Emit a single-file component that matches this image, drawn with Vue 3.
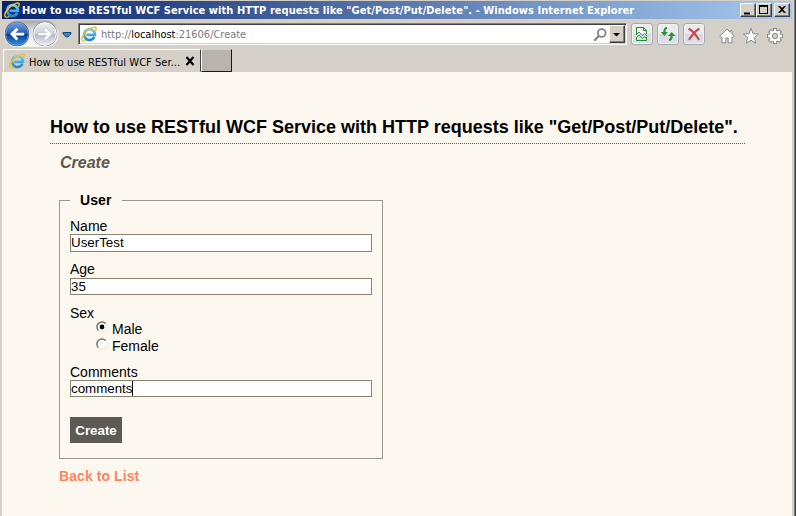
<script setup>
import { ref } from 'vue'

const title = 'How to use RESTful WCF Service with HTTP requests like "Get/Post/Put/Delete".'
const name = ref('UserTest')
const age = ref('35')
const sex = ref('Male')
const comments = ref('comments')
</script>

<template>
  <div class="window">
    <svg class="defs" width="0" height="0" aria-hidden="true">
      <defs>
        <linearGradient id="e-blue" x1="0" y1="0" x2="0" y2="1">
          <stop offset="0" stop-color="#6fcdf5" /><stop offset="1" stop-color="#2389d2" />
        </linearGradient>
        <linearGradient id="back-blue" x1="0" y1="0" x2="0" y2="1">
          <stop offset="0" stop-color="#6f9bd8" /><stop offset=".48" stop-color="#2560b4" />
          <stop offset=".52" stop-color="#083c94" /><stop offset="1" stop-color="#2f8fe0" />
        </linearGradient>
        <linearGradient id="forward-grey" x1="0" y1="0" x2="0" y2="1">
          <stop offset="0" stop-color="#eceef3" /><stop offset=".48" stop-color="#cdd2dc" />
          <stop offset=".52" stop-color="#b4bbc8" /><stop offset="1" stop-color="#e9eef6" />
        </linearGradient>
        <linearGradient id="rim" x1="0" y1="0" x2="0" y2="1">
          <stop offset="0" stop-color="#a9a7a3" /><stop offset=".35" stop-color="#dddbd7" /><stop offset="1" stop-color="#fff" />
        </linearGradient>
        <symbol id="ie" viewBox="0 0 16 16">
          <path d="M13.4 10.9A5.4 5.4 0 1 1 13.9 8.9H5.4" fill="none" stroke="url(#e-blue)" stroke-width="2.7" />
          <path d="M1.7 15.1C-.8 13.4 2.2 7.5 7.3 3.8C11.4.8 15.1.2 15.2 2.3C15.2 3.2 14.8 4.2 14.2 5.1" fill="none" stroke="#f6bd24" stroke-width="1.5" />
          <path d="M1.700 15.100C2.400 15.600 4 15 5.300 14.200" fill="none" stroke="#f6bd24" stroke-width="1.100" />
        </symbol>
      </defs>
    </svg>

    <header class="titlebar">
      <svg class="title-icon"><use href="#ie" /></svg>
      <span class="title-text">{{ title }} - Windows Internet Explorer</span>
      <div class="window-buttons">
        <button class="win-btn" aria-label="Minimize"><svg viewBox="0 0 14 12"><path d="M3 8.500h6v2H3z" /></svg></button>
        <button class="win-btn" aria-label="Maximize"><svg viewBox="0 0 14 12"><path d="M2 1h9v9H2zM3 3v6h7V3z" fill-rule="evenodd" /></svg></button>
        <button class="win-btn close" aria-label="Close"><svg viewBox="0 0 14 12"><path d="M3 2h2l2 2 2-2h2L8 5.500 11 9H9L7 7 5 9H3l3-3.500z" /></svg></button>
      </div>
    </header>

    <nav class="navbar">
      <svg class="travel" viewBox="0 0 56 28">
        <path d="M14 .5H43a13 13 0 0 1 0 26.500H14A13 13 0 0 1 14 .5z" fill="url(#rim)" />
        <circle cx="14" cy="14" r="12.200" fill="#2c4676" />
        <circle cx="14" cy="14" r="11.400" fill="url(#back-blue)" stroke="#8db6e8" stroke-width=".7" />
        <path d="M13.400 7.800l2 2-3 2.900h8.800v2.800h-8.800l3 2.900-2 2L7 14.100z" fill="#fff" />
        <circle cx="42" cy="14" r="12.200" fill="#858b97" />
        <circle cx="42" cy="14" r="11.300" fill="url(#forward-grey)" stroke="#fff" stroke-width="1" />
        <path d="M42.600 7.800l-2 2 3 2.900h-8.800v2.800h8.800l-3 2.900 2 2L49 14.100z" fill="#fff" stroke="#aab0bb" stroke-width=".5" />
      </svg>
      <svg class="recent" viewBox="0 0 10 8"><path d="M1 1.500h8v1.300L5.800 6H4.200L1 2.800z" fill="#2f8acb" stroke="#174777" /></svg>
      <div class="address">
        <svg class="page-icon"><use href="#ie" /></svg>
        <span class="url">http://<b>localhost</b>:21606/Create</span>
        <svg class="search" viewBox="0 0 14 14"><circle cx="8.700" cy="5" r="3.900" fill="none" stroke="#858585" stroke-width="1.800" /><path d="M5.800 7.900L1.200 12.700" stroke="#858585" stroke-width="2.200" /></svg>
        <button class="drop" aria-label="Show address history"><svg viewBox="0 0 13 15"><path d="M3 6h7L6.500 9.500z" /></svg></button>
      </div>
      <div class="tools">
        <button class="tool" aria-label="Compatibility view">
          <svg viewBox="0 0 16 16" fill="none" stroke="#219127"><path d="M2.500 8V1.500h7l3 3V8M9.500 1.500v3h3" fill="#fff" /><path d="M2.500 11v3.500h10V11" /><path d="M2 9l3-3 3.500 3.500 2-2L13 10M2 12l3-3 3.500 3.500 2-2L13 13" stroke-width=".9" /></svg>
        </button>
        <button class="tool" aria-label="Refresh">
          <svg viewBox="0 0 16 16" fill="#27952c"><path d="M7 1v2C5.900 3 5.500 4 5.500 6H8L4.300 10 .8 6h2.500C3.300 3 4.500 1 7 1z" /><path d="M9 15v-2c1.100 0 1.500-1 1.500-3H8l3.700-4 3.500 4h-2.500c0 3-1.200 5-3.700 5z" /></svg>
        </button>
        <button class="tool" aria-label="Stop">
          <svg viewBox="0 0 16 16"><path d="M3.500 3.200C6 4.500 9.500 8.500 12.500 13M12.500 3.200C10 4.500 6.500 8.500 3.500 13" fill="none" stroke="#d04547" stroke-width="2.100" stroke-linecap="square" /></svg>
        </button>
      </div>
      <div class="commands">
        <svg viewBox="0 0 16 16"><path d="M8 1.200L.8 8.200l1.500 1.500.7-.6v5.700h3.800V10h2.400v4.800H13V9.100l.7.600 1.500-1.500-2.200-2.100V2.700h-1.800v1.500z" fill="#fff" stroke="#8a8a8a" /></svg>
        <svg viewBox="0 0 16 16"><path d="M8 .3l2 5.400 5.600.3-4.300 3.500 1.500 5.700L8 12.200l-4.800 3 1.500-5.700L.4 6l5.600-.3z" fill="#fff" stroke="#8a8a8a" /></svg>
        <svg viewBox="0 0 16 16">
          <g stroke="#858585" stroke-width="4.200"><path d="M8 0v16M0 8h16M2.400 2.400l11.200 11.200M13.600 2.400L2.400 13.600" /></g>
          <circle cx="8" cy="8" r="5.800" fill="#fff" stroke="#858585" />
          <path d="M8 1v14M1 8h14M3.100 3.100l9.800 9.800M12.900 3.100L3.100 12.900" stroke="#fff" stroke-width="2.300" />
          <circle cx="8" cy="8" r="2.700" fill="#d4d0c8" stroke="#858585" />
        </svg>
      </div>
    </nav>

    <div class="tabs">
      <div class="tab">
        <svg class="tab-icon"><use href="#ie" /></svg>
        <span class="tab-text">How to use RESTful WCF Ser...</span>
        <svg class="tab-close" viewBox="0 0 10 10"><path d="M1.500 1l7 8M8.500 1l-7 8" stroke="#000" stroke-width="2.200" /></svg>
      </div>
      <button class="new-tab" aria-label="New tab"></button>
    </div>

    <main class="page">
      <h1>{{ title }}</h1>
      <h2>Create</h2>
      <form class="user-form" @submit.prevent>
        <fieldset>
          <legend>User</legend>
          <label class="field name">Name<input v-model="name" type="text" /></label>
          <label class="field age">Age<input v-model="age" type="text" /></label>
          <div class="sex">
            <span>Sex</span>
            <label v-for="option in ['Male', 'Female']" :key="option" class="option">
              <input v-model="sex" type="radio" name="sex" :value="option" />
              <svg viewBox="0 0 12 12"><circle cx="6" cy="6" r="5" fill="#fff" stroke="#e6e3dc" /><path d="M2.400 9.600A5 5 0 0 1 9.600 2.400" fill="none" stroke="#777" stroke-width="1.500" /><circle v-if="sex === option" cx="6" cy="6" r="2.400" /></svg>
              {{ option }}
            </label>
          </div>
          <label class="field comments">Comments
            <span class="entry"><span>{{ comments }}</span><i class="caret"></i></span>
          </label>
          <button class="create">Create</button>
        </fieldset>
      </form>
      <a class="back">Back to List</a>
    </main>
  </div>
</template>

<style>
body { margin: 0; overflow: hidden; background: #d4d0c8; }
</style>

<style scoped>
* { box-sizing: border-box; }
.window { width: 796px; height: 516px; overflow: hidden; display: flex; flex-direction: column; padding: 1px 2px 0; border-right: 1px solid #404040; box-shadow: inset -1px 0 #808080; background: #d4d0c8; font: 11px/15px "DejaVu Sans Condensed", "DejaVu Sans", sans-serif; font-stretch: condensed; color: #000; }
.defs { position: absolute; }
svg { display: block; flex: none; }
button { padding: 0; margin: 0; }
.titlebar { display: flex; align-items: center; flex: none; width: 790px; height: 18px; padding: 0 2px; background: linear-gradient(90deg, #0a246a, #a6caf0); color: #fff; }
.title-icon { width: 16px; height: 16px; }
.title-text { flex: 1; margin-left: 2px; font-weight: bold; white-space: nowrap; letter-spacing: .055px; }
.window-buttons { display: flex; }
.win-btn { width: 16px; height: 14px; border: 1px solid; border-color: #fff #404040 #404040 #fff; box-shadow: inset -1px -1px #808080; background: #d4d0c8; }
.win-btn svg { width: 14px; height: 12px; }
.win-btn.close { margin-left: 2px; }
.navbar { display: flex; flex: none; height: 30px; padding-top: 1px; }
.travel { width: 56px; height: 28px; margin-left: 1px; }
.recent { width: 10px; height: 8px; margin: 11px 0 0 3px; }
.address { display: flex; width: 549px; height: 22px; margin: 3px 0 0 6px; padding: 1px 1px 1px 2px; border: 1px solid; border-color: #808080 #fff #fff #808080; box-shadow: inset 1px 1px #404040, inset -1px -1px #d4d0c8; background: #fff; color: #7b7b7b; }
.page-icon { width: 16px; height: 16px; margin-top: 1px; }
.url { flex: 1; margin: 2px 0 0 4px; letter-spacing: -.02px; }
.url b { color: #000; font-weight: normal; }
.search { width: 14px; height: 14px; margin: 3px 2px 0 0; }
.drop { width: 16px; height: 18px; border: 1px solid; border-color: #fff #404040 #404040 #fff; box-shadow: inset -1px -1px #808080; background: #d4d0c8; }
.drop svg { width: 13px; height: 15px; }
.tools { display: flex; gap: 4px; margin: 3px 0 0 4px; }
.tool { display: grid; place-items: center; width: 22px; height: 22px; border: 1px solid #a9abb3; border-radius: 3px; box-shadow: inset 0 0 0 1px #f0f1f5; background: linear-gradient(#eaebef 48%, #d5d8e4 52%, #dfe2eb); }
.tool svg { width: 16px; height: 16px; }
.commands { display: flex; gap: 8px; margin: 8px 0 0 14px; }
.commands svg { width: 16px; height: 16px; overflow: visible; }
.tabs { display: flex; flex: none; height: 23px; padding-left: 1px; }
.tab { display: flex; width: 198px; height: 23px; padding: 3px 0 0 5px; border: 1px solid; border-color: #fff #404040 transparent #fff; }
.tab-icon { width: 16px; height: 16px; }
.tab-text { width: 152px; margin: 2px 0 0 4px; white-space: nowrap; letter-spacing: .04px; }
.tab-close { width: 10px; height: 10px; margin: 3px 0 0 4px; }
.new-tab { width: 31px; height: 23px; border: solid; border-width: 1px 1px 1px 1px; border-color: #d4d0c8 #181818 #181818 #fff; background: #b8b4ac; }
.page { flex: 1; width: 790px; padding: 44px 47px 0 48px; background: #fcf8ef; font: 14px/17px "Liberation Sans", Arial, sans-serif; }
h1 { height: 28px; margin: 0; border-bottom: 1px dotted #5c5a52; font-size: 18px; line-height: 22px; white-space: nowrap; }
h2 { margin: 9px 0 0 10px; color: #5c5a52; font-size: 16px; line-height: 20px; font-style: italic; }
.user-form { margin: 19px 0 0 9px; }
fieldset { width: 324px; height: 267px; margin: 0; padding: 9px 10px 0; border: 1px solid #99978f; min-width: 0; }
legend { padding: 0 10px; height: 17px; line-height: 17px; font-weight: bold; letter-spacing: .1px; }
.field { display: block; height: 43px; line-height: 17px; }
.field.age { height: 44px; }
.field input, .entry { display: flex; align-items: center; width: 302px; height: 17px; padding: 0; border: 1px solid #8b8371; background: #fff; color: #000; font: 13.333px/15px "Liberation Sans", Arial, sans-serif; outline: none; }
.field.name input { height: 18px; margin-top: -1px; padding-bottom: 1px; }
.entry { margin-top: -1px; }
.sex { height: 59px; }
.sex > span { display: block; height: 16px; }
.option { display: flex; align-items: center; height: 17px; padding-left: 26px; }
.option input { position: absolute; opacity: 0; pointer-events: none; }
.option svg { width: 12px; height: 12px; margin: -5px 4px 0 0; }
.caret { width: 1px; height: 15px; background: #000; }
.create { display: block; width: 52px; height: 26px; margin-top: 10px; border: 0; background: #5c5a52; color: #fff; font: bold 13.333px/17px "Liberation Sans", Arial, sans-serif; }
.back { display: block; margin: 9px 0 0 9px; color: #ff8461; font-weight: bold; letter-spacing: .08px; }
</style>
